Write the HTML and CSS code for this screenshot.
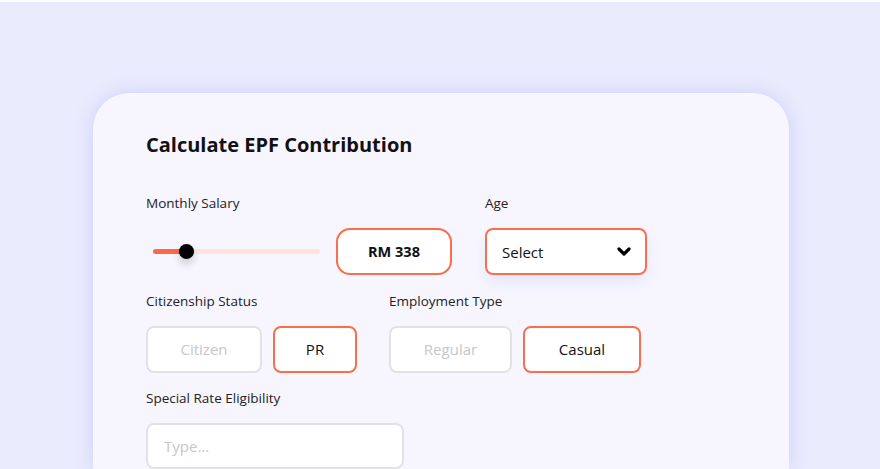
FILE: index.html
```html
<!DOCTYPE html>
<html lang="en">
  <head>
    <meta charset="UTF-8" />
    <meta name="viewport" content="width=device-width, initial-scale=1.0" />
    <title>EPF Calculator</title>
    <link rel="stylesheet" href="styles.css">
  </head>
  <body>
    <div class="page">
      <div class="card">
        <h1>Calculate EPF Contribution</h1>

        <div class="row row-top">
          <div class="field">
            <label>Monthly Salary</label>
            <div class="salary">
              <div class="slider">
                <div class="track">
                  <div class="fill"></div>
                  <div class="thumb"></div>
                </div>
              </div>
              <div class="amount">RM 338</div>
            </div>
          </div>
          <div class="field">
            <label>Age</label>
            <div class="select">
              <span>Select</span>
              <svg width="14" height="10" viewBox="0 0 14 10">
                <polyline points="2,2 7,7 12,2" fill="none" stroke="#000" stroke-width="3.2" stroke-linecap="round" stroke-linejoin="round" />
              </svg>
            </div>
          </div>
        </div>

        <div class="row row-mid">
          <div class="field">
            <label>Citizenship Status</label>
            <div class="options">
              <div class="opt citizen">Citizen</div>
              <div class="opt pr active">PR</div>
            </div>
          </div>
          <div class="field">
            <label>Employment Type</label>
            <div class="options">
              <div class="opt regular">Regular</div>
              <div class="opt casual active">Casual</div>
            </div>
          </div>
        </div>

        <div class="field">
          <label>Special Rate Eligibility</label>
          <input type="text" class="text-input" placeholder="Type..." />
        </div>
      </div>
    </div>
  </body>
</html>
```

FILE: styles.css
```css
body {
  margin: 0;
  font-family: "Open Sans", "Liberation Sans", sans-serif;
  background: #eaebfd;
  border-top: 2px solid #ffffff;
  overflow: hidden;
}
.page {
  padding: 91px 91px 0 93px;
}
.card {
  width: 696px;
  height: 376px;
  box-sizing: border-box;
  background: #f7f6ff;
  border-radius: 36px 36px 0 0;
  padding: 37px 53px 0;
  box-shadow: 0 0 18px rgba(190, 196, 245, 0.7);
}
h1 {
  margin: 0 0 33px;
  font-size: 20px;
  line-height: 30px;
  font-weight: 700;
  color: #111;
}
.row {
  display: flex;
  gap: 32px;
  margin-bottom: 15px;
}
.row-top {
  gap: 33px;
  margin-bottom: 16px;
}
.field label {
  display: block;
  font-size: 13.5px;
  line-height: 20px;
  color: #222;
  margin-bottom: 15px;
}
.salary {
  display: flex;
  align-items: center;
  gap: 16px;
}
.slider {
  width: 174px;
  padding-left: 7px;
  box-sizing: border-box;
}
.track {
  position: relative;
  height: 5px;
  border-radius: 3px;
  background: #fde4df;
}
.fill {
  width: 33px;
  height: 5px;
  border-radius: 3px;
  background: #fa6a48;
}
.thumb {
  position: absolute;
  left: 26px;
  top: -5px;
  width: 15px;
  height: 15px;
  border-radius: 50%;
  background: #000;
  box-shadow: 0 5px 8px rgba(0, 0, 0, 0.18);
}
.amount {
  width: 116px;
  height: 47px;
  box-sizing: border-box;
  border: 2px solid #fa6e4c;
  border-radius: 14px;
  background: #fff;
  display: flex;
  align-items: center;
  justify-content: center;
  padding-bottom: 1px;
  font-size: 14.5px;
  font-weight: 700;
  color: #111;
}
.select {
  width: 162px;
  height: 47px;
  box-sizing: border-box;
  border: 2px solid #fa6e4c;
  border-radius: 8px;
  background: #fff;
  display: flex;
  align-items: center;
  justify-content: space-between;
  padding: 0 14px 0 15px;
  font-size: 15px;
  color: #111;
  box-shadow: 0 8px 14px rgba(200, 204, 245, 0.35);
}
.select svg {
  margin-top: 1px;
}
.options {
  display: flex;
  gap: 11px;
}
.opt {
  height: 47px;
  box-sizing: border-box;
  border: 2px solid #e2e2e6;
  border-radius: 8px;
  background: #fff;
  display: flex;
  align-items: center;
  justify-content: center;
  padding-bottom: 2px;
  font-size: 15px;
  color: #c6c6cc;
}
.opt.active {
  border-color: #fa6e4c;
  color: #111;
}
.citizen {
  width: 116px;
}
.pr {
  width: 84px;
}
.regular {
  width: 123px;
}
.casual {
  width: 118px;
}
.text-input {
  display: block;
  width: 258px;
  height: 46px;
  box-sizing: border-box;
  border: 2px solid #e2e2e6;
  border-radius: 8px;
  background: #fff;
  padding: 0 16px;
  font-family: inherit;
  font-size: 15px;
  outline: none;
}
.text-input::placeholder {
  color: #c6c6cc;
}
```
